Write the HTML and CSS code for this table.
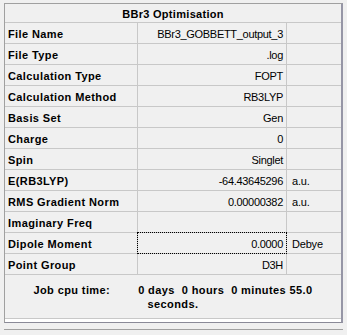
FILE: index.html
```html
<!DOCTYPE html>
<html>
<head>
<meta charset="utf-8">
<link rel="stylesheet" href="styles.css">
</head>
<body>
<div class="frame">
  <div class="grid">
    <div class="title">BBr3 Optimisation</div>

    <div class="lab">File Name</div><div class="val">BBr3_GOBBETT_output_3</div><div class="unit"></div>
    <div class="lab">File Type</div><div class="val">.log</div><div class="unit"></div>
    <div class="lab">Calculation Type</div><div class="val">FOPT</div><div class="unit"></div>
    <div class="lab">Calculation Method</div><div class="val">RB3LYP</div><div class="unit"></div>
    <div class="lab">Basis Set</div><div class="val">Gen</div><div class="unit"></div>
    <div class="lab">Charge</div><div class="val">0</div><div class="unit"></div>
    <div class="lab">Spin</div><div class="val">Singlet</div><div class="unit"></div>
    <div class="lab">E(RB3LYP)</div><div class="val">-64.43645296</div><div class="unit">a.u.</div>
    <div class="lab">RMS Gradient Norm</div><div class="val">0.00000382</div><div class="unit">a.u.</div>
    <div class="lab">Imaginary Freq</div><div class="val"></div><div class="unit"></div>
    <div class="lab">Dipole Moment</div><div class="val focus">0.0000</div><div class="unit">Debye</div>
    <div class="lab">Point Group</div><div class="val">D3H</div><div class="unit"></div>

    <div class="job">
      <div class="jobline"><span class="jobhead">Job cpu time:</span>0 days  0 hours  0 minutes 55.0</div>
      <div class="jobline">seconds.</div>
    </div>
  </div>
  <div class="blank"></div>
</div>
<div class="below"></div>
</body>
</html>
```

FILE: styles.css
```css
html, body {
  margin: 0;
  padding: 0;
  background: #f0f0f0;
}
body {
  padding: 3px 0 0 4px;
  font-family: "Liberation Sans", Arial, sans-serif;
  font-size: 11px;
  color: #000;
}
.frame {
  width: 336px;
  border-left: 1px solid #a0a0a0;
  border-top: 1px solid #a0a0a0;
  border-right: 2px solid #9696a6;
  border-bottom: 1px solid #8a8a98;
  background: #ffffff;
}
.grid {
  display: grid;
  grid-template-columns: 133px 149px 54px;
  grid-template-rows: 19px repeat(12, 21px) 44px;
  background: #f0f0f0;
}
.title {
  grid-column: 1 / 4;
  box-sizing: border-box;
  border-bottom: 1px solid #c8c8c8;
  font-weight: bold;
  letter-spacing: 0.3px;
  text-align: center;
  line-height: 16px;
  padding-top: 2px;
}
.lab, .val, .unit {
  box-sizing: border-box;
  border-bottom: 1px solid #c8c8c8;
  line-height: 20px;
  padding-top: 1px;
  white-space: nowrap;
}
.lab {
  border-right: 1px solid #c8c8c8;
  font-weight: bold;
  letter-spacing: 0.4px;
  padding-left: 3px;
}
.val {
  border-right: 1px solid #c8c8c8;
  text-align: right;
  letter-spacing: -0.3px;
  padding-right: 3px;
}
.unit {
  letter-spacing: -0.2px;
  padding-left: 5px;
}
.focus {
  position: relative;
}
.focus::after {
  content: "";
  position: absolute;
  top: -1px;
  left: -1px;
  right: -1px;
  bottom: -1px;
  border: 1px dotted #000;
}
.job {
  grid-column: 1 / 4;
  box-sizing: border-box;
  border-bottom: 1px solid #c8c8c8;
  padding-top: 8px;
  font-weight: bold;
  letter-spacing: 0.4px;
  text-align: center;
  line-height: 14px;
}
.jobline {
  white-space: pre;
}
.jobhead {
  margin-right: 28px;
}
.seconds {
  letter-spacing: 0.8px;
}
.blank {
  height: 3px;
  background: #ffffff;
}
.below {
  margin-top: 6px;
  width: 339px;
  border-top: 1px solid #a0a0a0;
}
```
